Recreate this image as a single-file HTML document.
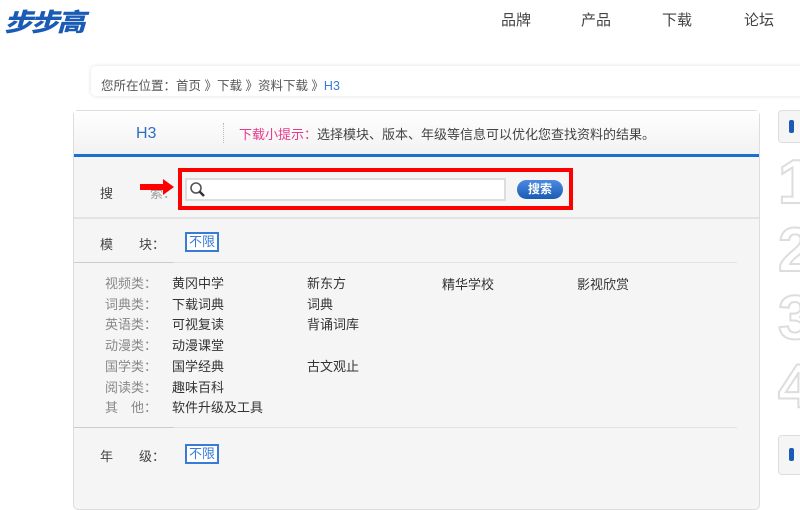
<!DOCTYPE html>
<html><head><meta charset="utf-8"><style>
*{margin:0;padding:0;box-sizing:border-box}
body{width:800px;height:463px;overflow:hidden;background:#fff;font-family:"Liberation Sans","Noto Sans CJK SC",sans-serif;font-size:13px;color:#444;position:relative}
.hdr{position:absolute;left:0;top:0;width:800px;height:61px;background:#fff}
.logo{position:absolute;left:4px;top:3px;font-size:25px;font-weight:900;font-style:italic;color:#1a5bb5;letter-spacing:-2px;transform:scaleX(1.15);transform-origin:left}
.nav{position:absolute;top:9px;font-size:15px;color:#444}
.bc{position:absolute;left:91px;top:66px;width:720px;height:30px;background:#fff;border-radius:5px;padding:9px 0 0 10px;font-size:12.5px;color:#555;box-shadow:0 0 5px #e0e0e0}
.panel{position:absolute;left:73px;top:110px;width:687px;height:400px;background:#f5f5f5;border:1px solid #ddd;border-radius:5px}
.ph{height:46px;background:linear-gradient(#fff,#f2f2f2);border-bottom:3px solid #1a6fd0;position:relative}
.abs{position:absolute}
.side{position:absolute;left:778px;width:30px;background:#f5f5f5;border:1px solid #ddd;border-radius:4px}
.num{position:absolute;left:778px;font-size:62px;line-height:62px;color:#fff;font-weight:bold;-webkit-text-stroke:2px #ddd}
.lbl{color:#888}
.it{position:absolute;font-size:13px;color:#333}
.bx{position:absolute;border:2px solid #3a7bd5;color:#3a7bd5;padding:0 2px;font-size:13px;line-height:16px;background:#fff}
</style></head><body>
<div class="hdr">
<div class="logo">步步高</div>
<div class="nav" style="left:501px">品牌</div>
<div class="nav" style="left:581px">产品</div>
<div class="nav" style="left:662px">下载</div>
<div class="nav" style="left:744px">论坛</div>
</div>
<div class="bc">您所在位置：首页 》下载 》资料下载 》<span style="color:#3a7bd5">H3</span></div>
<div class="panel">
<div class="ph">
<div class="abs" style="left:62px;top:14px;font-size:16px;color:#2f6fc0">H3</div>
<div class="abs" style="left:149px;top:12px;height:20px;border-left:1px dotted #bbb"></div>
<div class="abs" style="left:165px;top:13px;font-size:13px"><span style="color:#e8388a">下载小提示：</span>选择模块、版本、年级等信息可以优化您查找资料的结果。</div>
</div>
<div class="abs" style="left:26px;top:72px">搜</div>
<div class="abs" style="left:76px;top:72px;color:#999">索：</div>
<div class="abs" style="left:66px;top:73px;width:26px;height:6px;background:#f00"></div>
<div class="abs" style="left:89px;top:68px;width:0;height:0;border-top:8px solid transparent;border-bottom:8px solid transparent;border-left:11px solid #f00"></div>
<div class="abs" style="left:104px;top:57px;width:395px;height:42px;border:4px solid #f00"></div>
<div class="abs" style="left:111px;top:67px;width:321px;height:23px;background:#fff;border:2px solid #ddd"></div>
<svg class="abs" style="left:115px;top:70px" width="18" height="18"><circle cx="7" cy="7" r="5" fill="none" stroke="#555" stroke-width="1.6"/><line x1="10.5" y1="10.5" x2="15" y2="15" stroke="#333" stroke-width="2.5"/></svg>
<div class="abs" style="left:443px;top:69px;width:46px;height:19px;border-radius:10px;background:linear-gradient(#4a8ae0,#1a5bb5);color:#fff;font-size:12px;font-weight:bold;text-align:center;line-height:19px">搜索</div>
<div class="abs" style="left:0;top:106px;width:685px;border-top:2px solid #e3e3e3"></div>
<div class="abs" style="left:26px;top:123px">模　　块：</div>
<div class="bx" style="left:111px;top:121px">不限</div>
<div class="abs" style="left:0;top:151px;width:663px;border-top:1px solid #e3e3e3"></div>
<div class="abs" style="left:0;top:151px;width:100px;border-top:1px solid #ccc"></div>
<div class="abs lbl" style="left:31px;top:163px;line-height:20.7px">视频类：<br>词典类：<br>英语类：<br>动漫类：<br>国学类：<br>阅读类：<br>其　他：</div>
<div class="abs" style="left:98px;top:163px;line-height:20.7px;color:#333">黄冈中学<br>下载词典<br>可视复读<br>动漫课堂<br>国学经典<br>趣味百科<br>软件升级及工具</div>
<div class="abs" style="left:233px;top:163px;line-height:20.7px;color:#333">新东方<br>词典<br>背诵词库<br><br>古文观止</div>
<div class="it" style="left:368px;top:163px">精华学校</div>
<div class="it" style="left:503px;top:163px">影视欣赏</div>
<div class="abs" style="left:0;top:316px;width:663px;border-top:1px solid #e3e3e3"></div>
<div class="abs" style="left:0;top:316px;width:100px;border-top:1px solid #ccc"></div>
<div class="abs" style="left:26px;top:335px">年　　级：</div>
<div class="bx" style="left:111px;top:333px">不限</div>
</div>
<div class="side" style="top:110px;height:33px"><div style="position:absolute;left:10px;top:9px;width:5px;height:13px;background:#1a5bb5;border-radius:2px"></div></div>
<div class="num" style="top:152px">1</div>
<div class="num" style="top:220px">2</div>
<div class="num" style="top:288px">3</div>
<div class="num" style="top:356px">4</div>
<div class="side" style="top:435px;height:40px"><div style="position:absolute;left:10px;top:12px;width:5px;height:13px;background:#1a5bb5;border-radius:2px"></div></div>
</body></html>
